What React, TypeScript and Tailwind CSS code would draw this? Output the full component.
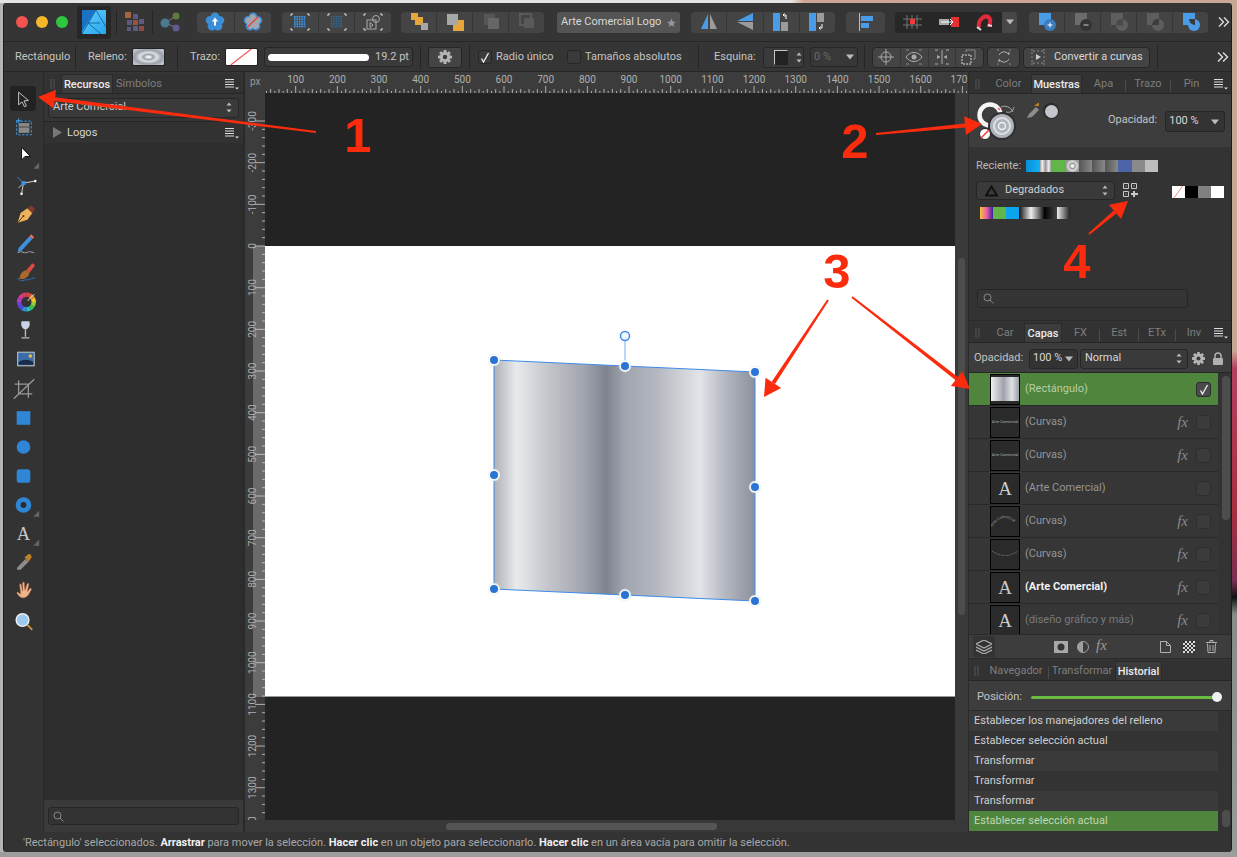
import React from "react";

const Svg = ({ w = 20, h = 20, vb, children, className = "" }: any) => (
  <svg width={w} height={h} viewBox={vb || `0 0 ${w} ${h}`} className={`block shrink-0 ${className}`}>{children}</svg>
);

const Grp = ({ className = "", children }: any) => (
  <div className={`flex h-[21px] divide-x divide-[#363636] rounded-[4px] bg-[#444444] ${className}`}>
    {React.Children.map(children, (c) => <div className="flex flex-1 items-center justify-center">{c}</div>)}
  </div>
);
const Sep = ({ className = "" }: any) => <div className={`h-[24px] w-px shrink-0 bg-[#262626] ${className}`} />;
const Chevrons = ({ className = "" }: any) => (
  <Svg w={14} h={12} className={className}><path d="M2 1.500 6.500 6 2 10.500M7 1.500 11.500 6 7 10.500" fill="none" stroke="#ddd" strokeWidth="1.400" /></Svg>
);
const Menu = ({ className = "" }: any) => (
  <Svg w={14} h={12} className={className}>
    <path d="M0 1.500h9M0 4h9M0 6.500h9M0 9h9" stroke="#ddd" strokeWidth="1.100" /><path d="M10 9.500h4l-2 2z" fill="#ddd" />
  </Svg>
);
const Updown = () => (
  <Svg w={6} h={11}><path d="M3 .5 5.500 3.500h-5zM3 10.500.5 7.500h5z" fill="#bbb" /></Svg>
);
const Down = () => <Svg w={8} h={6}><path d="M0 .5h8L4 5.500z" fill="#bbb" /></Svg>;
const Grip = () => <Svg w={5} h={10}><path d="M1 0v10M4 0v10" stroke="#555" strokeWidth="1" /></Svg>;
const NoneSwatch = () => (
  <svg width="100%" height="100%" viewBox="0 0 33 18" preserveAspectRatio="none" className="block">
    <rect width="33" height="18" fill="#fff" /><path d="M5 18 27 0" stroke="#f2545b" strokeWidth="1.300" />
  </svg>
);
const Gear = ({ s = 14, c = "#b5b5b5" }: any) => (
  <Svg w={s} h={s} vb="0 0 14 14">
    <g fill={c}>
      {[0, 45, 90, 135].map((a) => <rect key={a} x="5.500" y="0" width="3" height="14" rx=".6" transform={`rotate(${a} 7 7)`} />)}
      <circle cx="7" cy="7" r="5" />
    </g>
    <circle cx="7" cy="7" r="2.200" fill="#3c3c3c" />
  </Svg>
);
const Check = () => <Svg w={10} h={11}><path d="M1.500 6.500 3.500 10 8.500 1" fill="none" stroke="#f2f2f2" strokeWidth="1.300" /></Svg>;
const SearchGlyph = () => (
  <Svg w={11} h={11}><circle cx="4.500" cy="4.500" r="3.500" fill="none" stroke="#8a8a8a" /><path d="m7 7 3.500 3.500" stroke="#8a8a8a" /></Svg>
);

const Flower = ({ slash }: any) => (
  <Svg w={20} h={20}>
    <g fill="#3a8ed8">
      {[0, 72, 144, 216, 288].map((a) => <circle key={a} cx="10" cy="4.800" r="4.300" transform={`rotate(${a} 10 10)`} />)}
      <circle cx="10" cy="10" r="6" />
    </g>
    {slash ? (
      <g>
        {[0, 72, 144, 216, 288].map((a) => <circle key={a} cx="10" cy="5.500" r="3.200" fill="#a3a6ad" transform={`rotate(${a} 10 10)`} />)}
        <circle cx="10" cy="10" r="5" fill="#a3a6ad" /><path d="M4 15.500 15.500 4.500" stroke="#ef3b3b" strokeWidth="1.200" />
      </g>
    ) : (
      <path d="M10 5.500 13 9.500h-2v4H9v-4H7z" fill="#fff" />
    )}
  </Svg>
);
const Corners = ({ children }: any) => (
  <Svg w={20} h={18}>
    <path d="M1 3V1h2M17 1h2v2M19 15v2h-2M3 17H1v-2" fill="none" stroke="#ddd" />
    {children}
  </Svg>
);
const Dots = ({ n, step, x, y, c }: any) => (
  <g fill={c}>{Array.from({ length: n * n }).map((_, i) => <rect key={i} x={x + (i % n) * step} y={y + Math.floor(i / n) * step} width={step - 0.7} height={step - 0.7} />)}</g>
);
const BoolIcon = ({ k }: any) => {
  const on = ["add", "last"].includes(k);
  return (
    <Svg w={20} h={20}>
      <rect x="2" y="1" width="12" height="12" fill={on ? "#4a9be8" : k === "sub" ? "#6c6c6c" : "#5d5d5d"} />
      <circle cx="13" cy="13" r="6" fill={k === "add" ? "#3a7cbe" : k === "last" ? "#4a9be8" : k === "sub" ? "#333" : "#5d5d5d"} />
      {k === "last" && <path d="M7 7h7v6a6 6 0 0 1-6-6" fill="#3a3a3a" />}
      {k === "int" && <path d="M7 13a6 6 0 0 1 7-6v7z" fill="#4a4a4a" />}
      {k === "xor" && <path d="M7 13a6 6 0 0 1 7-6v6z" fill="#3d3d3d" />}
      {k === "add" && <path d="M13 10.500v5M10.500 13h5" stroke="#fff" />}
      {k === "sub" && <path d="M10.500 13h5" stroke="#ccc" />}
    </Svg>
  );
};

const Tool = ({ children, sel }: any) => (
  <div className="relative flex h-[29px] w-[39px] items-center justify-center">
    {sel && <div className="absolute left-[6px] top-[2px] h-[25px] w-[26px] rounded-[3px] bg-[#222222]" />}
    <svg width="39" height="29" viewBox="0 0 40 29" className="relative block">{children}</svg>
  </div>
);
const Corner = () => <path d="M36 27h-6l6-6z" fill="#666" />;
const wheel = ["#e0413c", "#ef7d2a", "#f2c12e", "#9ccc3a", "#35c45a", "#2cc4b0", "#2f8fe0", "#4a4be0", "#7a3bd8", "#b43bc8", "#d63a8f", "#e03a64"];

const tools = [
  <Tool sel key="a"><path d="M15 8v13l3.500-3 2.500 5 2-1-2.500-5 4.500-.5z" fill="none" stroke="#c8c8c8" /></Tool>,
  <Tool key="b"><rect x="13" y="8" width="15" height="14" fill="none" stroke="#3f9be8" strokeDasharray="2.500 1.500" /><rect x="15" y="10" width="11" height="10" fill="#8a8a8a" /><path d="M15 14h11" stroke="#444" /><path d="M15 5v5M12.500 7.500h5" stroke="#3f9be8" /></Tool>,
  <Tool key="c"><path d="M18 5v13l3.500-3.500 5.500 0z" fill="#fff" stroke="#111" /><Corner /></Tool>,
  <Tool key="d"><path d="m14 6 6 6" stroke="#3c88cf" /><path d="M20 12 32 10M20 12l-2 11M20 12l-5 5" stroke="#d0d0d0" /><rect x="18" y="10" width="4" height="4" fill="#3a94e6" /><circle cx="32" cy="10" r="1.400" fill="#eee" /><circle cx="18" cy="23" r="1.400" fill="#eee" /></Tool>,
  <Tool key="e"><path d="M14 23 17 13l7-5 5 5-5 7z" fill="#eeb25c" /><path d="m14 23 6-7" stroke="#5a3b12" /><circle cx="20" cy="16" r="1" fill="#5a3b12" /><path d="m24 8 4-3 4 4-3 4z" fill="#7e3a2e" /></Tool>,
  <Tool key="f"><path d="m15 19 11-12 3 3-11 12-4 1z" fill="#3f8fe0" /><path d="m26 7 2-2 3 3-2 2z" fill="#e86d5a" /><path d="M14 24c4-3 7 2 11-1 1-.5 4 .5 6 1" fill="none" stroke="#aaa" /></Tool>,
  <Tool key="g"><path d="m23 12 6-7 3 2-6 8z" fill="#d84a44" /><path d="M16 21c0-5 3-8 7-9l3 3c-1 5-6 7-10 6" fill="#a8682e" /><path d="M14 20c4 6 7 1 10 2 3 0 5-2 8-2" fill="none" stroke="#2d6fbb" /></Tool>,
  <Tool key="h">
    {wheel.map((c, i) => <path key={c} d="M23 7.500a7.500 7.500 0 0 1 3.800 1" fill="none" stroke={c} strokeWidth="4.500" transform={`rotate(${i * 30} 23 15)`} />)}
    <path d="m23 15 8-8" stroke="#eee" /><circle cx="23" cy="15" r="1.800" fill="#333" />
  </Tool>,
  <Tool key="i"><path d="M18 5h8c1 4 0 8-4 8s-5-4-4-8z" fill="#c9d4e6" /><path d="M22 13v8M18 22h8" stroke="#bbb" strokeWidth="1.400" /></Tool>,
  <Tool key="j"><rect x="14" y="7" width="17" height="14" fill="#3a6ea8" stroke="#c8c8c8" /><path d="M15 17c5-3 10-3 15 0v3H15z" fill="#1a2b4a" /><circle cx="27" cy="11" r="1.800" fill="#f2b93d" /></Tool>,
  <Tool key="k"><path d="M15 6v14h14M11 10h14v14M10 25 31 5" fill="none" stroke="#9a9a9a" strokeWidth="1.300" /></Tool>,
  <Tool key="l"><rect x="13" y="8" width="14" height="14" fill="#2f86d6" /></Tool>,
  <Tool key="m"><circle cx="20" cy="15" r="7" fill="#2f86d6" /></Tool>,
  <Tool key="n"><rect x="13" y="8" width="14" height="14" rx="3" fill="#2f86d6" /></Tool>,
  <Tool key="o"><circle cx="20" cy="15" r="8" fill="#2f86d6" /><circle cx="20" cy="15" r="3" fill="#2c2c2c" /><Corner /></Tool>,
  <Tool key="p"><text x="20" y="21" textAnchor="middle" fontFamily="Liberation Serif" fontSize="19" fill="#c8c8c8">A</text><Corner /></Tool>,
  <Tool key="q"><path d="m13 22 1-3 8-8 3 3-8 8z" fill="#8d8d8d" /><path d="m21 9 4-3c2-1 4 2 3 4l-3 4z" fill="#b98226" /></Tool>,
  <Tool key="r"><path d="M15 19c-1-2-3-3-1-4l3 2-1-9c0-2 2-2 2 0l1 6V6c0-1.500 2-1.500 2 0l.5 7 2-6c.5-1.500 2.500-1 2 .5l-1.500 7 2.500-3c1-1 2.500 0 1.500 1.500-2 3-3 7-7 8-3 .5-5-1-6.500-3z" fill="#f0b48c" stroke="#8a5536" strokeWidth=".5" /></Tool>,
  <Tool key="s"><circle cx="19" cy="14" r="6.500" fill="#9bc9ef" stroke="#eee" strokeWidth="1.500" /><path d="m24 19 5 5" stroke="#d49440" strokeWidth="1.800" /></Tool>,
];

const Ruler = () => {
  const h = Array.from({ length: 16 }, (_, i) => 254 + (i + 1) * 41.67);
  const ticks = Array.from({ length: 175 }, (_, i) => 254 + i * 4.167);
  return (
    <svg width="723" height="21" viewBox="245 72 723 21" className="block shrink-0">
      <rect x="245" y="72" width="723" height="21" fill="#3c3c3c" />
      <text x="250" y="85" fontSize="10" fill="#9a9a9a" fontFamily="Roboto">px</text>
      {ticks.filter((t) => t > 265 && t < 967).map((t) => {
        const k = Math.round((t - 254) / 4.167);
        return <path key={t} d={`M${t} 93v${k % 10 === 0 ? -7 : k % 2 === 0 ? -4 : -2}`} stroke="#c8c8c8" strokeWidth=".8" />;
      })}
      {h.map((x, i) => <text key={x} x={x} y="83" textAnchor="middle" fontSize="10" fill="#b0b0b0" fontFamily="Roboto">{(i + 1) * 100}</text>)}
      <text x="959" y="83" textAnchor="middle" fontSize="10" fill="#b0b0b0" fontFamily="Roboto">170</text>
    </svg>
  );
};
const VRuler = () => {
  const labels = Array.from({ length: 17 }, (_, i) => i - 3);
  const y0 = 246;
  const ticks = Array.from({ length: 90 }, (_, i) => y0 - 125 + i * 8.334).filter((t) => t > 93 && t < 830);
  return (
    <svg width="20" height="739" viewBox="245 93 20 739" className="block shrink-0">
      <rect x="245" y="93" width="20" height="739" fill="#3c3c3c" />
      <rect x="253" y="246" width="12" height="451" fill="#6a6a6a" />
      {ticks.map((t) => <path key={t} d={`M265 ${t}h-${Math.abs((t - y0) / 41.67 - Math.round((t - y0) / 41.67)) < 0.02 ? 10 : 3}`} stroke="#d0d0d0" strokeWidth=".8" />)}
      {labels.map((n) => {
        const y = y0 + n * 41.67;
        return <text key={n} x="256" y={y} textAnchor="middle" fontSize="10" fill="#aeaeae" fontFamily="Roboto" transform={`rotate(-90 256 ${y})`}>{n * 100}</text>;
      })}
      <text x="256" y="822" textAnchor="middle" fontSize="10" fill="#aeaeae" fontFamily="Roboto" transform="rotate(-90 256 822)">00</text>
    </svg>
  );
};

const Handle = ({ x, y }: any) => (
  <g><circle cx={x} cy={y} r="6" fill="#fff" opacity=".85" stroke="#ddd" strokeWidth=".5" /><circle cx={x} cy={y} r="4" fill="#2b74d4" /></g>
);
const Shape = () => (
  <svg width="690" height="727" viewBox="265 93 690 727" className="absolute left-0 top-0 block">
    <defs>
      <linearGradient id="metal" gradientUnits="userSpaceOnUse" x1="494" y1="0" x2="755" y2="0">
        <stop offset="0" stopColor="#adb0b6" /><stop offset=".085" stopColor="#e8eaed" /><stop offset=".2" stopColor="#c6c8cd" />
        <stop offset=".35" stopColor="#a0a3ad" /><stop offset=".43" stopColor="#7e838f" /><stop offset=".5" stopColor="#a0a4ae" />
        <stop offset=".62" stopColor="#b4b7bf" /><stop offset=".79" stopColor="#e2e4e8" /><stop offset=".88" stopColor="#b7bac2" /><stop offset="1" stopColor="#8c909b" />
      </linearGradient>
    </defs>
    <path d="M494 360 755 372V601L494 589Z" fill="url(#metal)" stroke="#3d8be8" strokeWidth="1" />
    <path d="M625 341v25" stroke="#a9c8ef" strokeWidth="1.500" />
    <circle cx="625" cy="336" r="4.500" fill="#f2f7fe" stroke="#3d8be8" strokeWidth="1.500" />
    {[[494, 360], [625, 366], [755, 372], [494, 475], [755, 487], [494, 589], [625, 595], [755, 601]].map(([x, y]) => <Handle key={`${x}${y}`} x={x} y={y} />)}
  </svg>
);

const Tab = ({ active, className = "", children }: any) => (
  <div className={`flex h-full items-center justify-center pt-[2px] ${active ? "border-x border-t border-[#2a2a2a] bg-[#3c3c3c] font-medium text-[#ececec]" : "text-[#7e7e7e]"} ${className}`}>{children}</div>
);
const TabSep = () => <div className="mt-[4px] h-[12px] w-px shrink-0 self-center bg-[#4c4c4c]" />;
const TabBar = ({ children }: any) => (
  <div className="flex h-[20px] items-end border-b border-[#262626] bg-[#323232]"><div className="flex h-[19px] w-full items-end">{children}</div></div>
);
const Box = ({ className = "", children }: any) => (
  <div className={`flex items-center rounded-[3px] border border-[#262626] bg-[#3a3a3a] ${className}`}>{children}</div>
);

const MiniText = () => <span className="whitespace-nowrap text-[4px] text-[#aaaaaa]">Arte Comercial</span>;
const BigA = () => <span className="text-[19px] leading-none text-[#c9c9c9] [font-family:'Liberation_Serif',serif]">A</span>;
const layers = [
  { n: "(Rectángulo)", sel: true, fx: false, t: <div className="h-[24px] w-full bg-[linear-gradient(90deg,#f0f0f0,#9fa3ad_45%,#dfe1e5_75%,#9a9da6)]" /> },
  { n: "(Curvas)", fx: true, t: <MiniText /> },
  { n: "(Curvas)", fx: true, t: <MiniText /> },
  { n: "(Arte Comercial)", fx: false, t: <BigA /> },
  { n: "(Curvas)", fx: true, t: (
    <svg width="28" height="28" viewBox="0 0 28 28" className="block"><path id="arcT" d="M1 20Q14 2 27 20" fill="none" /><text fontSize="4" fill="#999" fontFamily="Roboto"><textPath href="#arcT">Arte Comercial</textPath></text></svg>
  ) },
  { n: "(Curvas)", fx: true, t: <svg width="28" height="28" viewBox="0 0 28 28" className="block"><path d="M1 11Q14 20 27 11" fill="none" stroke="#777" strokeDasharray="1.500 1" /></svg> },
  { n: "(Arte Comercial)", bold: true, fx: true, t: <BigA /> },
  { n: "(diseño gráfico y más)", dim: true, fx: true, t: <BigA /> },
];
const FxMark = ({ light }: any) => <span className={`text-[15px] italic leading-none [font-family:'Liberation_Serif',serif] ${light ? "text-[#9a9a9a]" : "text-[#8a8a8a]"}`}>fx</span>;

const history = [
  "Establecer los manejadores del relleno",
  "Establecer selección actual",
  "Transformar",
  "Transformar",
  "Transformar",
  "Establecer selección actual",
];

const recents = [
  "bg-[linear-gradient(90deg,#0a8fd8,#12aef0)]",
  "bg-[linear-gradient(90deg,#777,#eee,#999,#eee,#777)]",
  "bg-[#62b548]",
  "bg-[radial-gradient(circle,#eee_15%,#999_30%,#ddd_50%,#999_75%)]",
  "bg-[linear-gradient(90deg,#555,#888)]",
  "bg-[linear-gradient(90deg,#555,#888)]",
  "bg-[linear-gradient(90deg,#555,#888)]",
  "bg-[#4d64a8]",
  "bg-[#8a8a8a]",
  "bg-[#bdbdbd]",
];
const grads = [
  "bg-[linear-gradient(90deg,#f5c63a,#ee5fa7,#3a1fa0)]",
  "bg-[#62b548]",
  "bg-[#0ca4ee]",
  "bg-[linear-gradient(90deg,#111,#eee)]",
  "bg-[linear-gradient(90deg,#eee,#888,#111)]",
  "bg-[linear-gradient(90deg,#000,#444)]",
  "bg-[linear-gradient(90deg,#eee,#222)]",
];

const Arrow = ({ x1, y1, x2, y2, head = 17 }: any) => {
  const a = Math.atan2(y2 - y1, x2 - x1);
  const bx = x2 - Math.cos(a) * head, by = y2 - Math.sin(a) * head;
  const nx = -Math.sin(a), ny = Math.cos(a);
  const w = head * 0.55;
  return (
    <g fill="#fb2c0e">
      <polygon points={`${x1 + nx},${y1 + ny} ${bx + nx * 2},${by + ny * 2} ${bx - nx * 2},${by - ny * 2} ${x1 - nx},${y1 - ny}`} />
      <polygon points={`${x2},${y2} ${bx + nx * w},${by + ny * w} ${bx - nx * w},${by - ny * w}`} />
    </g>
  );
};

export default function App() {
  return (
    <div className="relative flex h-[857px] w-[1237px] flex-col overflow-hidden bg-[#9a9a9a] text-[11px] text-[#c4c4c4] [font-family:Roboto,sans-serif]">
      <div className="h-[3px] shrink-0 bg-[linear-gradient(90deg,#e4e4e4_0%,#e4e4e4_64%,#cfa493_65%,#c9a795_100%)]" />
      <div className="flex h-[849px] shrink-0">
        <div className="w-[3px] shrink-0 bg-[#b4b4b4]" />
        <div className="flex h-[849px] w-[1229px] shrink-0 flex-col overflow-hidden rounded-[4px] border-x border-[#1c1c1c] bg-[#333333]">
          {/* top toolbar */}
          <div className="flex h-[39px] shrink-0 items-center border-b border-[#262626] bg-[#353535]">
            <div className="ml-[12px] flex w-[52px] gap-[8px]">
              <div className="h-[12px] w-[12px] rounded-full bg-[#f4544e]" />
              <div className="h-[12px] w-[12px] rounded-full bg-[#f5b62c]" />
              <div className="h-[12px] w-[12px] rounded-full bg-[#2ec73f]" />
            </div>
            <div className="ml-[9px] flex h-[33px] w-[34px] items-center justify-center rounded-[3px] bg-[#272727]">
              <Svg w={24} h={24}>
                <defs><linearGradient id="lg" x1="0" y1="0" x2="1" y2="1"><stop offset="0" stopColor="#68d2ff" /><stop offset="1" stopColor="#25a4ee" /></linearGradient></defs>
                <rect width="24" height="24" fill="url(#lg)" />
                <path d="M0 0h14L0 22z" fill="#1a72c4" />
                <path d="M0 24 14 0M14 0l10 17M6 13h12M6 13l13 11" fill="none" stroke="#0f5a96" strokeWidth=".8" />
              </Svg>
            </div>
            <Sep className="ml-[5px]" />
            <Svg w={20} h={20} className="ml-[8px]">
              <rect x="0" y="0" width="6" height="6" fill="#a5653f" /><rect x="8" y="2" width="5" height="5" fill="#5c5a80" /><rect x="14" y="7" width="5" height="5" fill="#5c5a80" />
              <rect x="2" y="8" width="5" height="5" fill="#5c5a80" /><rect x="8" y="8" width="5" height="5" fill="#9a5238" /><rect x="8" y="14" width="5" height="5" fill="#5c5a80" /><rect x="14" y="14" width="5" height="5" fill="#8e4a48" /><rect x="2" y="15" width="4" height="4" fill="#5c5a80" />
            </Svg>
            <Sep className="ml-[7px]" />
            <Svg w={20} h={20} className="ml-[7px]">
              <path d="M5 11 16 4M5 11l12 5" stroke="#7a7a7a" /><circle cx="5" cy="11" r="4.500" fill="#4a7a92" /><circle cx="16" cy="4" r="3.500" fill="#5f7a3d" /><circle cx="16" cy="16" r="3.500" fill="#5f5a8f" />
            </Svg>
            <Grp className="ml-[17px] w-[74px]"><Flower /><Flower slash /></Grp>
            <Grp className="ml-[11px] w-[109px]">
              <Corners><Dots n={5} step={2.400} x={4} y={3} c="#3b96e8" /></Corners>
              <Corners><Dots n={7} step={1.700} x={4} y={3} c="#3170a8" /></Corners>
              <Corners><rect x="4" y="7" width="9" height="9" fill="none" stroke="#aaa" /><circle cx="13" cy="6" r="3.500" fill="none" stroke="#aaa" /><path d="m7 9.500 3 2.500-3 2.500z" fill="none" stroke="#aaa" /></Corners>
            </Grp>
            <Grp className="ml-[10px] w-[143px]">
              <Svg w={20} h={20}><rect x="2" y="1" width="7" height="7" fill="#e5a63b" /><rect x="6" y="5" width="8" height="8" fill="#e5a63b" /><rect x="12" y="11" width="7" height="7" fill="#a7a7a7" /></Svg>
              <Svg w={20} h={20}><rect x="8" y="8" width="11" height="11" fill="#e5a63b" /><rect x="2" y="2" width="11" height="11" fill="#a7a7a7" /></Svg>
              <Svg w={20} h={20}><rect x="3" y="2" width="11" height="11" fill="#565656" /><rect x="7" y="6" width="11" height="11" fill="#666" /></Svg>
              <Svg w={20} h={20}><rect x="3" y="2" width="11" height="11" fill="none" stroke="#5a5a5a" strokeWidth="2" /><rect x="7" y="6" width="10" height="10" fill="#5a5a5a" /></Svg>
            </Grp>
            <div className="ml-[13px] flex h-[21px] w-[123px] items-center rounded-[3px] bg-[#545454] pl-[4px] pr-[3px] pt-[1px] text-[#d8d8d8]">
              <span className="flex-1 whitespace-nowrap">Arte Comercial Logo</span>
              <span className="text-[12px] text-[#9a9a9a]">★</span>
            </div>
            <Grp className="ml-[11px] w-[144px]">
              <Svg w={20} h={20}><path d="M9 2v15H2z" fill="#4a9be8" /><path d="M11 2v15h7z" fill="#9b9b9b" /></Svg>
              <Svg w={20} h={20}><path d="M18 1v8H2z" fill="#4a9be8" /><path d="M18 18v-8H2z" fill="#9b9b9b" /></Svg>
              <Svg w={20} h={20}><rect x="2" y="1" width="7" height="18" fill="#4a9be8" /><rect x="10" y="10" width="7" height="9" fill="#9b9b9b" /><path d="M12 3h3v4M12 3l1.500-1.500M12 3l1.500 1.500" fill="none" stroke="#fff" /></Svg>
              <Svg w={20} h={20}><rect x="2" y="1" width="7" height="18" fill="#4a9be8" /><rect x="10" y="1" width="7" height="9" fill="#9b9b9b" /><path d="M15 12v4h-3M12 16l1.500-1.500M12 16l1.500 1.500" fill="none" stroke="#fff" /></Svg>
            </Grp>
            <Grp className="ml-[11px] w-[39px]">
              <Svg w={20} h={20}><path d="M3.500 1v18" stroke="#bdbdbd" /><rect x="5" y="4" width="12" height="5" fill="#4a9be8" /><rect x="5" y="11" width="8" height="5" fill="#4a9be8" /></Svg>
            </Grp>
            <div className="ml-[10px] flex h-[21px] w-[107px] rounded-l-[4px] bg-[#272727]">
              <div className="flex flex-1 items-center justify-center">
                <Svg w={22} h={20}><path d="M5 3v14M10 3v14M15 3v14M1 7h19M1 13h19" stroke="#777" /><rect x="8" y="7" width="5" height="5" fill="#f03a3a" /></Svg>
              </div>
              <div className="flex flex-1 items-center justify-center">
                <Svg w={20} h={12}><rect x="0" y="3" width="10" height="6" fill="#aaa" /><rect x="12" y="1" width="8" height="10" fill="#e8312f" /><path d="M2 6h12M11 3l3 3-3 3" stroke="#fff" fill="none" /></Svg>
              </div>
              <div className="flex flex-1 items-center justify-center">
                <Svg w={20} h={20}>
                  <path d="M4 17C1 12 4 6 9 3c4-2 8 0 9 4 1 3-1 6-1 8l-4 0c0-3 2-5 1-7s-3-2-5 0-3 5-2 7z" fill="#e12a3a" />
                  <path d="m3 15 4 3M14 13l4 1" stroke="#ddd" strokeWidth="2" />
                </Svg>
              </div>
            </div>
            <div className="flex h-[21px] w-[15px] items-center justify-center rounded-r-[4px] bg-[#474747]"><Down /></div>
            <Grp className="ml-[12px] w-[179px]">
              <BoolIcon k="add" /><BoolIcon k="sub" /><BoolIcon k="int" /><BoolIcon k="xor" /><BoolIcon k="last" />
            </Grp>
            <Chevrons className="ml-[9px]" />
          </div>

          {/* context toolbar */}
          <div className="flex h-[30px] shrink-0 items-center border-b border-[#262626] bg-[#353535] pt-[1px]">
            <span className="ml-[11px] w-[54px] whitespace-nowrap pt-[1px]">Rectángulo</span>
            <Sep className="ml-[6px]" />
            <span className="ml-[12px] w-[38px] whitespace-nowrap pt-[1px]">Relleno:</span>
            <div className="ml-[6px] h-[18px] w-[33px] rounded-[2px] border border-[#222222] bg-[radial-gradient(ellipse,#efefef_8%,#9aa0aa_22%,#dfe1e5_38%,#9aa0aa_62%,#c0c4ca_85%)]" />
            <Sep className="ml-[12px]" />
            <span className="ml-[12px] w-[29px] whitespace-nowrap pt-[1px]">Trazo:</span>
            <div className="ml-[6px] h-[18px] w-[33px] overflow-hidden rounded-[2px] border border-[#222222]"><NoneSwatch /></div>
            <Box className="ml-[6px] h-[20px] w-[149px] pl-[3px]">
              <div className="h-[7px] w-[101px] rounded-full bg-white" />
              <span className="ml-[6px] whitespace-nowrap">19.2 pt</span>
            </Box>
            <Sep className="ml-[7px]" />
            <Box className="ml-[7px] h-[21px] w-[34px] justify-center bg-[#444444]"><Gear /></Box>
            <Sep className="ml-[7px]" />
            <Box className="ml-[8px] h-[14px] w-[14px] justify-center bg-[#2a2a2a]"><Check /></Box>
            <span className="ml-[4px] w-[55px] whitespace-nowrap pt-[1px]">Radio único</span>
            <Box className="ml-[16px] h-[14px] w-[14px] bg-[#2f2f2f]" />
            <span className="ml-[4px] w-[92px] whitespace-nowrap pt-[1px]">Tamaños absolutos</span>
            <Sep className="ml-[21px]" />
            <span className="ml-[15px] w-[41px] whitespace-nowrap pt-[1px]">Esquina:</span>
            <Box className="ml-[8px] h-[21px] w-[41px] gap-[8px] pl-[10px]">
              <div className="h-[15px] w-[14px] border border-[#c8c8c8] bg-[#222222] [border-bottom-color:#222222] [border-right-color:#222222]" />
              <Updown />
            </Box>
            <Box className="ml-[6px] h-[20px] w-[48px] justify-between bg-[#383838] px-[3px] text-[#6a6a6a]"><span>0 %</span><Down /></Box>
            <Sep className="ml-[6px]" />
            <Grp className="ml-[7px] w-[112px] border border-[#262626]">
              <Svg w={16} h={16}><circle cx="8" cy="8" r="5" fill="none" stroke="#aaa" /><path d="M8 0v16M0 8h16" stroke="#aaa" /></Svg>
              <Svg w={18} h={16}><path d="M1 8c4-6 12-6 16 0-4 6-12 6-16 0z" fill="none" stroke="#aaa" /><circle cx="9" cy="8" r="2.500" fill="#aaa" /><path d="M1 1h3M14 1h3M1 15h3M14 15h3" stroke="#888" /></Svg>
              <Svg w={16} h={16}><path d="M8 1v14M3 8h3M10 8h3M1 1h3M12 1h3M1 15h3M12 15h3" stroke="#aaa" /><path d="m3 6 3 2-3 2zM13 6l-3 2 3 2z" fill="#aaa" /></Svg>
              <Svg w={18} h={16}><rect x="1" y="6" width="9" height="9" fill="none" stroke="#ddd" strokeDasharray="2 1" /><path d="M5 3V1h9v9h-2" fill="none" stroke="#888" /></Svg>
            </Grp>
            <Grp className="ml-[3px] w-[33px] border border-[#262626]">
              <Svg w={16} h={16}><path d="M3 6a5.500 5.500 0 0 1 10 0M13 10a5.500 5.500 0 0 1-10 0" fill="none" stroke="#aaa" /><path d="M1 1h2M13 1h2M1 15h2M13 15h2" stroke="#888" /><path d="m13 6 1-3-3 1zM3 10l-1 3 3-1z" fill="#aaa" /></Svg>
            </Grp>
            <div className="ml-[3px] flex h-[21px] w-[127px] items-center rounded-[4px] border border-[#262626] bg-[#444444] pl-[6px] text-[#d8d8d8]">
              <Svg w={16} h={16}><path d="M1 1h2M13 1h2M1 15h2M13 15h2M2 3v10M14 3v10M3 2h10M3 14h10" stroke="#8a8a8a" strokeDasharray="2 2" /><path d="m6 5 5 3-5 3z" fill="#ccc" /></Svg>
              <span className="ml-[8px] whitespace-nowrap">Convertir a curvas</span>
            </div>
            <Sep className="ml-[7px]" />
            <Chevrons className="ml-[58px]" />
          </div>

          {/* main */}
          <div className="flex h-[760px] shrink-0">
            {/* tool column */}
            <div className="w-[39px] shrink-0 bg-[#333333] pt-[12px]">{tools}</div>

            {/* assets panel */}
            <div className="flex w-[202px] shrink-0 flex-col border-l border-r-2 border-[#2a2a2a] bg-[#2d2d2d]">
              <div className="h-[2px] shrink-0 bg-[#353535]" />
              <TabBar>
                <div className="flex w-[17px] justify-center self-center"><Grip /></div>
                <Tab active className="w-[52px]">Recursos</Tab>
                <Tab className="w-[52px]">Símbolos</Tab>
                <Menu className="mb-[3px] ml-[60px]" />
              </TabBar>
              <div className="flex h-[27px] shrink-0 items-center bg-[#353535] px-[4px]">
                <Box className="h-[20px] w-full justify-between pl-[4px] pr-[6px] text-[#cfcfcf]"><span>Arte Comercial</span><Updown /></Box>
              </div>
              <div className="flex h-[22px] shrink-0 items-center border-t border-[#262626] bg-[#323232] pl-[9px]">
                <Svg w={9} h={11}><path d="M0 0v11l9-5.500z" fill="#777" /></Svg>
                <span className="ml-[5px] flex-1 pt-[1px] text-[#d4d4d4]">Logos</span>
                <Menu className="mr-[4px]" />
              </div>
              <div className="flex-1" />
              <div className="flex h-[32px] shrink-0 items-start bg-[#3a3a3a] px-[4px] pt-[7px]">
                <Box className="h-[18px] w-full bg-[#333333] pl-[4px]"><SearchGlyph /></Box>
              </div>
            </div>

            {/* centre */}
            <div className="flex w-[723px] shrink-0 flex-col">
              <Ruler />
              <div className="flex h-[727px] shrink-0">
                <VRuler />
                <div className="relative h-[727px] w-[690px] shrink-0 bg-[#232323] pt-[153px]">
                  <div className="h-[451px] border-b border-[#999999] bg-white" />
                  <Shape />
                </div>
                <div className="h-[727px] w-[13px] shrink-0 bg-[#3a3a3a] pl-[3px] pt-[165px]"><div className="h-[357px] w-[7px] rounded-full bg-[#4d4d4d]" /></div>
              </div>
              <div className="flex h-[12px] shrink-0 items-center bg-[#383838] pl-[201px]"><div className="h-[7px] w-[271px] rounded-full bg-[#555555]" /></div>
            </div>

            {/* right panels */}
            <div className="flex w-[263px] shrink-0 flex-col border-l border-[#2a2a2a] bg-[#333333]">
              <div className="h-[2px] shrink-0" />
              <TabBar>
                <div className="flex w-[17px] justify-center self-center"><Grip /></div>
                <Tab className="w-[45px]">Color</Tab>
                <Tab active className="w-[51px]">Muestras</Tab>
                <Tab className="w-[43px]">Apa</Tab><TabSep />
                <Tab className="w-[44px]">Trazo</Tab><TabSep />
                <Tab className="w-[41px]">Pin</Tab>
                <Menu className="mb-[3px] ml-[2px]" />
              </TabBar>
              <div className="flex h-[53px] shrink-0 items-start bg-[#3d3d3d]">
                <svg width="70" height="54" viewBox="969 93 70 54" className="block shrink-0">
                  <circle cx="990" cy="114" r="10.500" fill="none" stroke="#f5f5f5" strokeWidth="4.500" />
                  <path d="M998 107l2 2" stroke="#f2545b" strokeWidth="1.500" />
                  <path d="M1001 106c4-2 10 0 12 5M1014 106c-1 5-5 6-8 5" fill="none" stroke="#aaa" />
                  <circle cx="1002" cy="125" r="14" fill="#2f2f2f" />
                  <circle cx="1002" cy="125" r="12" fill="#aeb3bc" />
                  <circle cx="1002" cy="125" r="8" fill="none" stroke="#dfe1e5" strokeWidth="2" />
                  <circle cx="1002" cy="125" r="3.500" fill="none" stroke="#eef0f2" strokeWidth="1.500" />
                  <circle cx="985" cy="133" r="5.500" fill="#fff" stroke="#222" />
                  <path d="m981 137 8-8" stroke="#f2373a" strokeWidth="1.500" />
                  <path d="m1027 117 2-4 7-7 3 3-7 7z" fill="#8d8d8d" />
                  <path d="m1034 105 4-3c2-1 4 1 3 3" fill="#b98226" />
                </svg>
                <div className="mt-[9px] ml-[4px] flex h-[16px] w-[16px] items-center justify-center rounded-full bg-[#2a2a2a]"><div className="h-[13px] w-[13px] rounded-full bg-[#c3c7cd]" /></div>
                <span className="ml-[49px] mt-[19px] whitespace-nowrap leading-[13px]">Opacidad:</span>
                <Box className="ml-[8px] mt-[17px] h-[21px] w-[60px] justify-between bg-[#333333] pl-[3px] pr-[5px] text-[#d8d8d8]"><span>100 %</span><Down /></Box>
              </div>
              <div className="flex h-[174px] shrink-0 flex-col border-b border-[#2a2a2a]">
                <div className="mt-[13px] flex h-[12px] items-center pl-[7px]">
                  <span className="w-[50px] text-[#b8b8b8]">Reciente:</span>
                  <div className="flex h-[12px] w-[132px]">{recents.map((c, i) => <div key={i} className={`flex-1 ${c}`} />)}</div>
                </div>
                <div className="mt-[9px] flex h-[19px] items-start pl-[7px]">
                  <Box className="h-[19px] w-[139px] bg-[#3a3a3a] pl-[8px] pr-[6px] text-[#d0d0d0]">
                    <Svg w={13} h={12}><path d="M6.500 1.500 12 10.500H1z" fill="none" stroke="#111" strokeWidth="2" /></Svg>
                    <span className="ml-[7px] flex-1">Degradados</span>
                    <Updown />
                  </Box>
                  <Svg w={16} h={15} className="ml-[8px] mt-[2px]">
                    <path d="M.5.500h5v5h-5zM8.500.500h5v5h-5zM.5 8.500h5v5h-5z" fill="none" stroke="#c8c8c8" /><path d="M2.500 2.500h1v1h-1zM10.500 2.500h1v1h-1zM2.500 10.500h1v1h-1z" fill="#c8c8c8" /><path d="M11 8v6M8 11h7" stroke="#c8c8c8" strokeWidth="2" />
                  </Svg>
                  <div className="ml-[33px] mt-[5px] flex h-[12px] w-[52px]">
                    <div className="flex-1"><NoneSwatch /></div><div className="flex-1 bg-black" /><div className="flex-1 bg-[#808080]" /><div className="flex-1 bg-white" />
                  </div>
                </div>
                <div className="ml-[11px] mt-[7px] flex h-[12px] w-[90px]">{grads.map((c) => <div key={c} className={`flex-1 ${c}`} />)}</div>
                <div className="flex-1" />
                <Box className="mb-[12px] ml-[8px] h-[19px] w-[211px] bg-[#353535] pl-[5px]"><SearchGlyph /></Box>
              </div>
              <div className="h-[2px] shrink-0" />
              <TabBar>
                <div className="flex w-[17px] justify-center self-center"><Grip /></div>
                <Tab className="w-[38px]">Car</Tab>
                <Tab active className="w-[38px]">Capas</Tab>
                <Tab className="w-[37px]">FX</Tab><TabSep />
                <Tab className="w-[38px]">Est</Tab><TabSep />
                <Tab className="w-[36px]">ETx</Tab><TabSep />
                <Tab className="w-[36px]">Inv</Tab>
                <Menu className="mb-[3px] ml-[2px]" />
              </TabBar>
              <div className="flex h-[30px] shrink-0 items-center border-b border-[#262626] bg-[#3d3d3d] pl-[5px] pt-[2px]">
                <span className="w-[50px] whitespace-nowrap">Opacidad:</span>
                <Box className="ml-[5px] h-[20px] w-[49px] justify-between bg-[#333333] pl-[3px] pr-[4px] text-[#d8d8d8]"><span>100 %</span><Down /></Box>
                <Box className="ml-[2px] h-[20px] w-[108px] justify-between pl-[4px] pr-[5px] text-[#d8d8d8]"><span>Normal</span><Updown /></Box>
                <div className="ml-[4px]"><Gear s={13} /></div>
                <Svg w={10} h={13} className="ml-[8px]"><path d="M2 6V4a3 3 0 0 1 6 0v2" fill="none" stroke="#b0b0b0" strokeWidth="1.500" /><rect y="6" width="10" height="7" rx="1" fill="#b0b0b0" /></Svg>
              </div>
              <div className="flex h-[261px] shrink-0">
                <div className="w-[249px] overflow-hidden">
                  {layers.map((l, i) => (
                    <div key={i} className={`flex h-[33px] items-center border-b border-[#2a2a2a] pl-[21px] ${l.sel ? "bg-[#4f853c]" : "bg-[#363636]"}`}>
                      <div className="flex h-[31px] w-[30px] shrink-0 items-center justify-center overflow-hidden border border-black bg-[#2a2a2a]">{l.t}</div>
                      <span className={`ml-[5px] flex-1 whitespace-nowrap ${l.bold ? "font-bold text-[#f2f2f2]" : l.sel ? "text-[#b6ceaa]" : l.dim ? "text-[#7a7a7a]" : "text-[#959595]"}`}>{l.n}</span>
                      {l.fx && <FxMark />}
                      <div className={`ml-[8px] mr-[7px] flex h-[15px] w-[15px] items-center justify-center rounded-[3px] border ${l.sel ? "border-[#2c2c2c] bg-[#4a4a4a]" : "border-[#2e2e2e] bg-[#3b3b3b]"}`}>{l.sel && <Check />}</div>
                    </div>
                  ))}
                </div>
                <div className="w-[13px] pl-[4px] pt-[3px]"><div className="h-[144px] w-[8px] rounded-full bg-[#4d4d4d]" /></div>
              </div>
              <div className="flex h-[25px] shrink-0 items-center border-y border-[#2a2a2a] bg-[#3d3d3d] pl-[4px]">
                <div className="flex h-[21px] w-[22px] items-center justify-center bg-[#333333]">
                  <Svg w={16} h={14}><path d="M8 0 16 4 8 8 0 4zM0 7l8 4 8-4M0 10l8 4 8-4" fill="none" stroke="#b0b0b0" strokeWidth="1.200" /></Svg>
                </div>
                <Svg w={14} h={12} className="ml-[59px]"><rect width="14" height="12" fill="#a8a8a8" /><circle cx="7" cy="6" r="3.500" fill="#333" /></Svg>
                <Svg w={12} h={12} className="ml-[9px]"><circle cx="6" cy="6" r="5.500" fill="none" stroke="#a0a0a0" /><path d="M6 .5a5.500 5.500 0 0 0 0 11z" fill="#a0a0a0" /></Svg>
                <div className="ml-[7px]"><FxMark light /></div>
                <Svg w={11} h={12} className="ml-[53px]"><path d="M.5.500h6l4 4v7H.5zM6.500.500v4h4" fill="none" stroke="#b0b0b0" /></Svg>
                <Svg w={12} h={12} className="ml-[12px]">
                  <rect width="12" height="12" fill="#ddd" />
                  {Array.from({ length: 36 }).map((_, i) => (Math.floor(i / 6) + i) % 2 === 0 && <rect key={i} x={(i % 6) * 2} y={Math.floor(i / 6) * 2} width="2" height="2" fill="#333" />)}
                </Svg>
                <Svg w={11} h={13} className="ml-[11px]"><path d="M0 2.500h11M4 2V.5h3V2M1.500 3.500l.5 9h7l.5-9M4 5v6M7 5v6" fill="none" stroke="#b0b0b0" /></Svg>
              </div>
              <div className="h-[2px] shrink-0" />
              <TabBar>
                <div className="flex w-[15px] justify-center self-center"><Grip /></div>
                <Tab className="w-[64px]">Navegador</Tab><TabSep />
                <Tab className="w-[66px]">Transformar</Tab>
                <Tab active className="w-[47px]">Historial</Tab>
              </TabBar>
              <div className="flex h-[30px] shrink-0 items-center border-b border-[#2a2a2a] bg-[#3d3d3d] pl-[8px] pt-[3px]">
                <span className="w-[54px] whitespace-nowrap">Posición:</span>
                <div className="relative h-[3px] w-[187px] rounded-full bg-[#6abb41]">
                  <div className="absolute right-[-4px] top-[-3.500px] h-[10px] w-[10px] rounded-full bg-[#efefef]" />
                </div>
              </div>
              <div className="flex h-[120px] shrink-0">
                <div className="w-[249px]">
                  {history.map((t, i) => (
                    <div key={i} className={`flex h-[20px] items-center pl-[5px] pt-[1px] ${i === 5 ? "bg-[#4f853c] text-[#c2d6b8]" : i % 2 === 0 ? "bg-[#3a3a3a] text-[#d0d0d0]" : "bg-[#333333] text-[#d0d0d0]"}`}>{t}</div>
                  ))}
                </div>
                <div className="w-[13px] pl-[4px] pt-[99px]"><div className="h-[17px] w-[8px] rounded-full bg-[#4d4d4d]" /></div>
              </div>
            </div>
          </div>

          {/* status bar */}
          <div className="flex h-[20px] shrink-0 items-center whitespace-nowrap bg-[#333333] pl-[19px] pt-[3px] text-[#a8a8a8]">
            <span>'Rectángulo' seleccionados.&nbsp;</span><b className="text-[#f0f0f0]">Arrastrar</b><span>&nbsp;para mover la selección.&nbsp;</span><b className="text-[#f0f0f0]">Hacer clic</b><span>&nbsp;en un objeto para seleccionarlo.&nbsp;</span><b className="text-[#f0f0f0]">Hacer clic</b><span>&nbsp;en un área vacía para omitir la selección.</span>
          </div>
        </div>
        <div className="flex-1 bg-[linear-gradient(180deg,#c9a795_0%,#c9a795_41%,#b5405f_43%,#a82f3f_60%,#7a2f52_68%,#111111_70%,#8a8a8a_72%,#9a9a9a_100%)]" />
      </div>
      <div className="flex-1 bg-[#9d9d9d]" />

      {/* annotations */}
      <svg width="1237" height="857" viewBox="0 0 1237 857" className="pointer-events-none absolute left-0 top-0 block">
        <Arrow x1={316} y1={132} x2={38} y2={97} />
        <Arrow x1={876} y1={134} x2={982} y2={124} />
        <Arrow x1={828} y1={300} x2={764} y2={397} />
        <Arrow x1={852} y1={297} x2={970} y2={389} />
        <Arrow x1={1089} y1={234} x2={1128} y2={201} />
        <g fill="#fb2c0e" fontFamily="Liberation Sans" fontWeight="700" fontSize="49" textAnchor="middle">
          <text x="358" y="152">1</text>
          <text x="855" y="158">2</text>
          <text x="837" y="288">3</text>
          <text x="1077" y="278">4</text>
        </g>
      </svg>
    </div>
  );
}
